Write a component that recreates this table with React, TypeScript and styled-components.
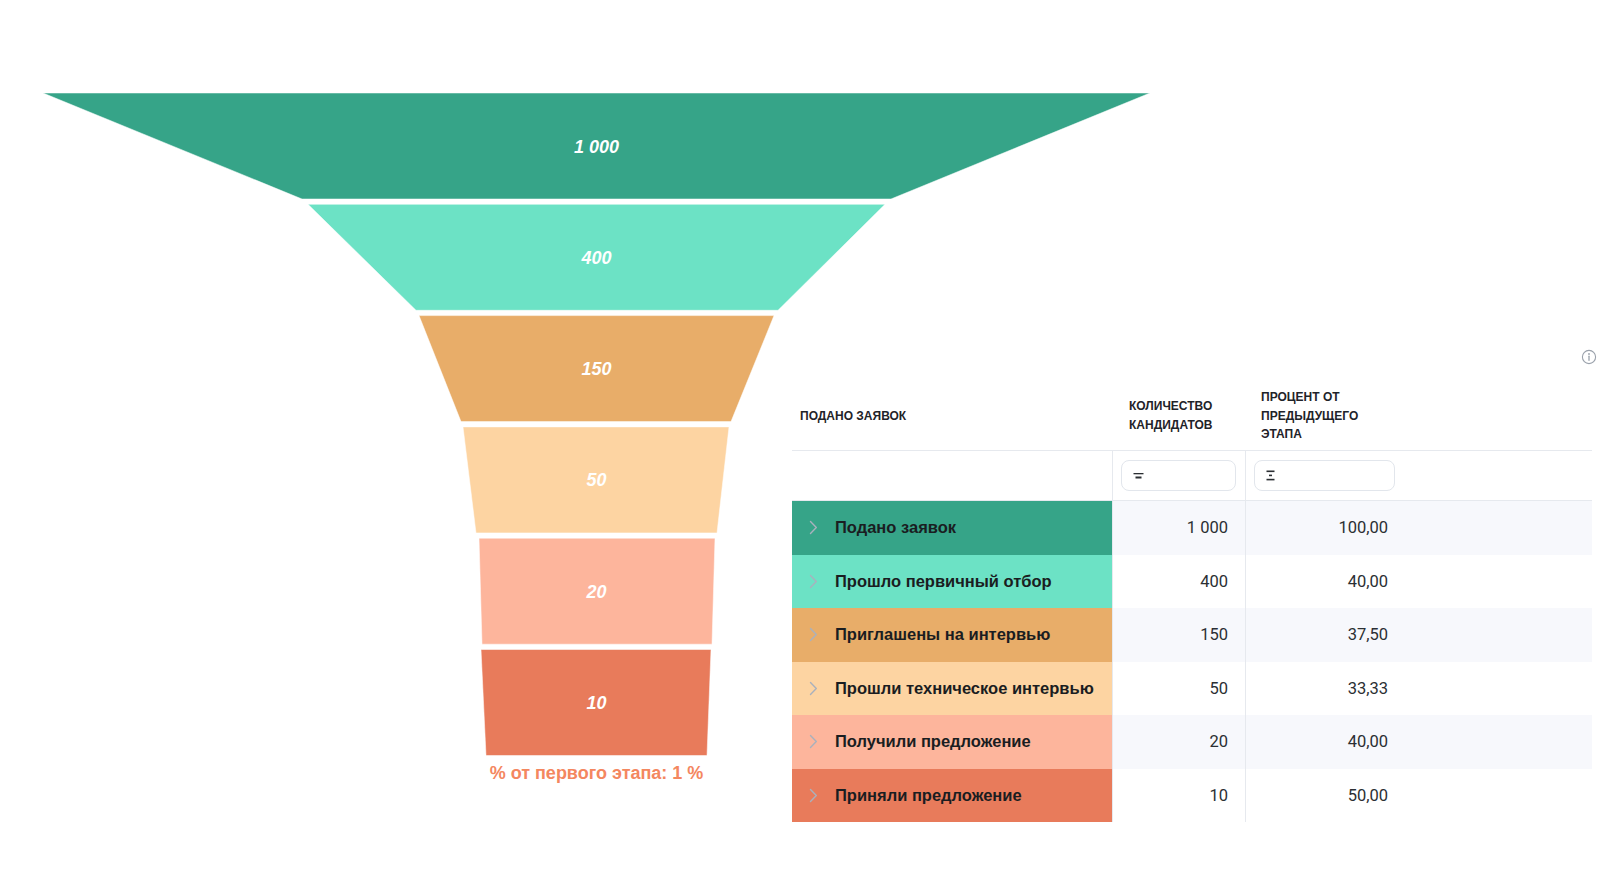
import React from 'react';
import styled, { createGlobalStyle } from 'styled-components';

const GlobalStyle = createGlobalStyle`
  html, body {
    margin: 0;
    padding: 0;
    background: #ffffff;
  }
  body {
    font-family: Roboto, "Noto Sans", "Liberation Sans", sans-serif;
    color: #1f2329;
  }
`;

type Stage = {
  name: string;
  count: string;
  percent: string;
  color: string;
  top: [number, number];
  bottom: [number, number];
};

const stages: Stage[] = [
  { name: 'Подано заявок', count: '1 000', percent: '100,00', color: '#36a488', top: [43, 1150], bottom: [302, 891] },
  { name: 'Прошло первичный отбор', count: '400', percent: '40,00', color: '#6ce2c5', top: [308, 885], bottom: [416, 778] },
  { name: 'Приглашены на интервью', count: '150', percent: '37,50', color: '#e8ad69', top: [419, 774], bottom: [461, 731] },
  { name: 'Прошли техническое интервью', count: '50', percent: '33,33', color: '#fdd4a2', top: [463, 729], bottom: [476, 717] },
  { name: 'Получили предложение', count: '20', percent: '40,00', color: '#fdb59c', top: [479, 715], bottom: [482, 712] },
  { name: 'Приняли предложение', count: '10', percent: '50,00', color: '#e87b5b', top: [481, 711], bottom: [486, 707] },
];

const SEG_TOP = 93;
const SEG_H = 106;
const SEG_GAP = 5.3;
const LABEL_FONT = "'Liberation Sans', Arial, sans-serif";

const Page = styled.div`
  display: grid;
  grid-template-columns: 792px 1fr;
  grid-template-rows: 349px auto;
  width: 1600px;
  min-height: 881px;
`;

const ChartArea = styled.svg`
  grid-column: 1 / 3;
  grid-row: 1 / 3;
  align-self: start;
  display: block;
`;

const Panel = styled.div`
  grid-column: 2;
  grid-row: 2;
  display: flex;
  flex-direction: column;
  position: relative;
  z-index: 1;
`;

const InfoRow = styled.div`
  display: flex;
  justify-content: flex-end;
  height: 16px;
  padding-right: 3px;
  margin-bottom: 13px;
`;

const Table = styled.div`
  width: 800px;
  display: grid;
  grid-template-columns: 320px 133px 1fr;
`;

const HeadCell = styled.div<{ $pad: number; $lh?: number }>`
  height: 73px;
  box-sizing: border-box;
  padding-top: 4px;
  display: flex;
  align-items: center;
  padding-left: ${(p) => p.$pad}px;
  font-family: 'Liberation Sans', Arial, sans-serif;
  font-size: 12px;
  font-weight: 700;
  line-height: ${(p) => p.$lh ?? 18.5}px;
  text-transform: uppercase;
  color: #1f2329;
  border-bottom: 1px solid #e6e9ee;
`;

const FilterCell = styled.div<{ $divider?: boolean }>`
  height: 49px;
  display: flex;
  align-items: center;
  padding-left: 8px;
  border-bottom: 1px solid #e6e9ee;
  border-left: ${(p) => (p.$divider ? '1px solid #e6e9ee' : 'none')};
`;

const FilterInput = styled.div<{ $w: number }>`
  width: ${(p) => p.$w}px;
  height: 31px;
  box-sizing: border-box;
  border: 1px solid #e2e6ec;
  border-radius: 8px;
  background: #fff;
  display: flex;
  align-items: center;
  padding-left: 11px;
`;

const NameCell = styled.div<{ $bg: string }>`
  height: 53.5px;
  display: flex;
  align-items: center;
  background: ${(p) => p.$bg};
  padding-left: 17px;
  gap: 17px;
  font-family: 'Liberation Sans', Arial, sans-serif;
  font-size: 16.5px;
  font-weight: 700;
  color: #1a1d21;
`;

const ValueCell = styled.div<{ $striped: boolean; $width?: number }>`
  height: 53.5px;
  display: flex;
  align-items: center;
  justify-content: ${(p) => (p.$width ? 'flex-start' : 'flex-end')};
  padding-right: ${(p) => (p.$width ? 0 : 17)}px;
  background: ${(p) => (p.$striped ? '#f7f8fc' : '#ffffff')};
  border-left: 1px solid #e6e9ee;
  font-size: 16.5px;
  color: #2b2f33;
`;

const ValueBox = styled.span<{ $w: number }>`
  width: ${(p) => p.$w}px;
  text-align: right;
`;

const Chevron = () => (
  <svg width="9" height="15" viewBox="0 0 9 15">
    <path d="M1.5 1.5 L7.3 7.5 L1.5 13.5" fill="none" stroke="#a9b1bd" strokeWidth="1.4" strokeLinecap="round" strokeLinejoin="round" />
  </svg>
);

const InfoIcon = () => (
  <svg width="16" height="16" viewBox="0 0 16 16">
    <circle cx="8" cy="8" r="6.6" fill="none" stroke="#9aa1ab" strokeWidth="1.1" />
    <circle cx="8" cy="5" r="0.9" fill="#9aa1ab" />
    <path d="M8 7.2 V11.3" stroke="#9aa1ab" strokeWidth="1.3" strokeLinecap="round" />
  </svg>
);

const FilterIcon = () => (
  <svg width="11" height="8" viewBox="0 0 11 8">
    <rect x="0.5" y="1" width="10" height="1.3" fill="#2b2f33" />
    <rect x="2.5" y="4.5" width="6" height="2" fill="#2b2f33" />
  </svg>
);

const SumIcon = () => (
  <svg width="9" height="11" viewBox="0 0 9 11">
    <rect x="0.5" y="0.5" width="8" height="1.6" fill="#2b2f33" />
    <rect x="3" y="4.6" width="3" height="1.6" fill="#2b2f33" />
    <rect x="0.5" y="8.8" width="8" height="1.6" fill="#2b2f33" />
  </svg>
);

function Funnel() {
  return (
    <ChartArea width="1600" height="800" viewBox="0 0 1600 800">
      {stages.map((s, i) => {
        const y1 = SEG_TOP + i * (SEG_H + SEG_GAP);
        const y2 = y1 + SEG_H;
        const pts = `${s.top[0]},${y1} ${s.top[1]},${y1} ${s.bottom[1]},${y2} ${s.bottom[0]},${y2}`;
        return (
          <g key={s.name}>
            <polygon points={pts} fill={s.color} stroke="#ffffff" strokeOpacity="0.5" strokeWidth="1" />
            <text
              x="596.5"
              y={y1 + SEG_H / 2 + 6.5}
              textAnchor="middle"
              fill="#ffffff"
              fontFamily={LABEL_FONT}
              fontSize="18"
              fontWeight="700"
              fontStyle="italic"
            >
              {s.count}
            </text>
          </g>
        );
      })}
      <text
        x="596.5"
        y="778.5"
        textAnchor="middle"
        fill="#f4875f"
        fontFamily={LABEL_FONT}
        fontSize="18"
        fontWeight="700"
      >
        % от первого этапа: 1 %
      </text>
    </ChartArea>
  );
}

export default function App() {
  return (
    <>
      <GlobalStyle />
      <Page>
        <Funnel />
        <Panel>
          <InfoRow>
            <InfoIcon />
          </InfoRow>
          <Table>
            <HeadCell $pad={8}>Подано заявок</HeadCell>
            <HeadCell $pad={17} $lh={19.5}>
              Количество
              <br />
              кандидатов
            </HeadCell>
            <HeadCell $pad={16}>
              Процент от
              <br />
              предыдущего
              <br />
              этапа
            </HeadCell>

            <FilterCell />
            <FilterCell $divider>
              <FilterInput $w={115}>
                <FilterIcon />
              </FilterInput>
            </FilterCell>
            <FilterCell $divider>
              <FilterInput $w={141}>
                <SumIcon />
              </FilterInput>
            </FilterCell>

            {stages.map((s, i) => (
              <React.Fragment key={s.name}>
                <NameCell $bg={s.color}>
                  <Chevron />
                  {s.name}
                </NameCell>
                <ValueCell $striped={i % 2 === 0}>{s.count}</ValueCell>
                <ValueCell $striped={i % 2 === 0} $width={142}>
                  <ValueBox $w={142}>{s.percent}</ValueBox>
                </ValueCell>
              </React.Fragment>
            ))}
          </Table>
        </Panel>
      </Page>
    </>
  );
}
